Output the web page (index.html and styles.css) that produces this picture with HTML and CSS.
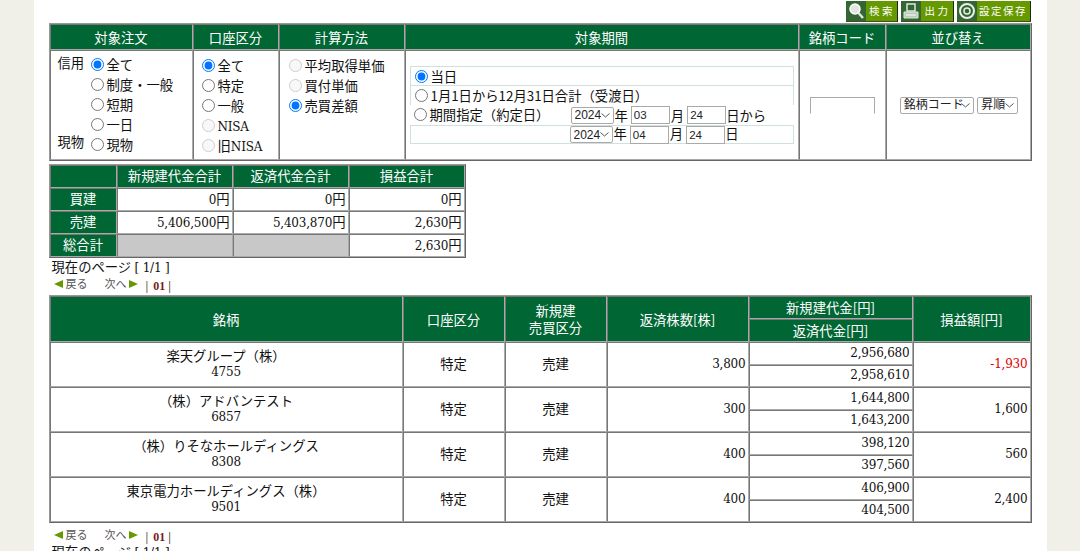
FILE: index.html
```html
<!DOCTYPE html>
<html lang="ja">
<head>
    <meta charset="UTF-8">
    <title>実現損益</title>
    <link rel="stylesheet" href="styles.css">
</head>
<body>
<div class="wrap">

    <div class="tool-btns">
        <a class="tool-btn btn-search"><span class="tool-icon">
            <svg width="20" height="20" viewBox="0 0 20 20"><circle cx="9" cy="8" r="5" fill="#dfe8df" stroke="#fff" stroke-width="1.5"/><path d="M12.5 12l4.5 5" stroke="#dfe8df" stroke-width="2.5"/></svg>
        </span><span class="tool-label">検索</span></a>
        <a class="tool-btn btn-print"><span class="tool-icon">
            <svg width="20" height="20" viewBox="0 0 20 20"><path d="M6 3h8v7H6z" fill="none" stroke="#dfe8df" stroke-width="1.5"/><path d="M3 11h14v6H3z" fill="#b8ccb8" stroke="#dfe8df"/><path d="M5 14h10" stroke="#fff"/></svg>
        </span><span class="tool-label">出力</span></a>
        <a class="tool-btn btn-save"><span class="tool-icon">
            <svg width="20" height="20" viewBox="0 0 20 20"><circle cx="10" cy="10" r="7" fill="none" stroke="#e8efe8" stroke-width="2"/><circle cx="10" cy="10" r="3" fill="none" stroke="#e8efe8" stroke-width="1.5"/></svg>
        </span><span class="tool-label">設定保存</span></a>
    </div>

    <form>
    <table class="grid search-table">
        <tr class="head-row">
            <th class="c-order">対象注文</th>
            <th class="c-account">口座区分</th>
            <th class="c-calc">計算方法</th>
            <th class="c-period">対象期間</th>
            <th class="c-code">銘柄コード</th>
            <th class="c-sort">並び替え</th>
        </tr>
        <tr class="search-row">
            <td>
                <div class="order-grid">
                    <span class="order-label">信用</span>
                    <div>
                        <label class="opt"><input type="radio" name="order" checked>全て</label>
                        <label class="opt"><input type="radio" name="order">制度・一般</label>
                        <label class="opt"><input type="radio" name="order">短期</label>
                        <label class="opt"><input type="radio" name="order">一日</label>
                    </div>
                    <span class="order-label order-label-2">現物</span>
                    <label class="opt"><input type="radio" name="order">現物</label>
                </div>
            </td>
            <td>
                <div class="opt-list">
                    <label class="opt"><input type="radio" name="account" checked>全て</label>
                    <label class="opt"><input type="radio" name="account">特定</label>
                    <label class="opt"><input type="radio" name="account">一般</label>
                    <label class="opt"><input type="radio" name="account" disabled><span class="lat">NISA</span></label>
                    <label class="opt"><input type="radio" name="account" disabled>旧<span class="lat">NISA</span></label>
                </div>
            </td>
            <td>
                <div class="opt-list opt-list-calc">
                    <label class="opt"><input type="radio" name="calc" disabled>平均取得単価</label>
                    <label class="opt"><input type="radio" name="calc" disabled>買付単価</label>
                    <label class="opt"><input type="radio" name="calc" checked>売買差額</label>
                </div>
            </td>
            <td>
                <div class="period">
                    <div class="period-row boxed"><label class="opt"><input type="radio" name="period" checked>当日</label></div>
                    <div class="period-row boxed-open"><label class="opt gothic"><input type="radio" name="period">1月1日から12月31日合計（受渡日）</label></div>
                    <div class="period-row">
                        <label class="opt period-label"><input type="radio" name="period">期間指定（約定日）</label>
                        <select class="sel-year"><option>2024</option></select><span class="unit">年</span>
                        <input class="inp-date" type="text" value="03"><span class="unit">月</span>
                        <input class="inp-date" type="text" value="24"><span>日から</span>
                    </div>
                    <div class="period-row boxed last-row">
                        <span class="period-label"></span>
                        <select class="sel-year"><option>2024</option></select><span class="unit">年</span>
                        <input class="inp-date" type="text" value="04"><span class="unit">月</span>
                        <input class="inp-date" type="text" value="24"><span>日</span>
                    </div>
                </div>
            </td>
            <td class="center"><input class="inp-code" type="text"></td>
            <td class="center">
                <select class="sel-sort sort-key"><option>銘柄コード</option></select>
                <select class="sel-sort sort-dir"><option>昇順</option></select>
            </td>
        </tr>
    </table>
    </form>

    <table class="grid total-table">
        <tr>
            <th class="t-side"></th>
            <th class="t-col">新規建代金合計</th>
            <th class="t-col">返済代金合計</th>
            <th class="t-col">損益合計</th>
        </tr>
        <tr>
            <th>買建</th>
            <td class="num"><span class="lat">0</span>円</td>
            <td class="num"><span class="lat">0</span>円</td>
            <td class="num"><span class="lat">0</span>円</td>
        </tr>
        <tr>
            <th>売建</th>
            <td class="num"><span class="lat">5,406,500</span>円</td>
            <td class="num"><span class="lat">5,403,870</span>円</td>
            <td class="num"><span class="lat">2,630</span>円</td>
        </tr>
        <tr>
            <th>総合計</th>
            <td class="blank"></td>
            <td class="blank"></td>
            <td class="num"><span class="lat">2,630</span>円</td>
        </tr>
    </table>

    <p class="page-now">現在のページ <span class="lat">[ 1/1 ]</span></p>
    <div class="pager pager-top">
        <a class="pager-link"><i class="tri-left"></i>戻る</a>
        <a class="pager-link pager-next">次へ<i class="tri-right"></i></a>
        <span class="pager-nums">|<b>01</b>|</span>
    </div>

    <table class="grid result-table">
        <tr class="r-head">
            <th rowspan="2" class="r-name">銘柄</th>
            <th rowspan="2" class="r-acc">口座区分</th>
            <th rowspan="2" class="r-side">新規建<br>売買区分</th>
            <th rowspan="2" class="r-qty">返済株数[株]</th>
            <th class="r-amt">新規建代金[円]</th>
            <th rowspan="2" class="r-pl">損益額[円]</th>
        </tr>
        <tr class="r-head"><th>返済代金[円]</th></tr>

        <tr>
            <td rowspan="2" class="center">楽天グループ（株）<br><span class="lat">4755</span></td>
            <td rowspan="2" class="center">特定</td>
            <td rowspan="2" class="center">売建</td>
            <td rowspan="2" class="num lat">3,800</td>
            <td class="num lat">2,956,680</td>
            <td rowspan="2" class="num lat loss">-1,930</td>
        </tr>
        <tr><td class="num lat">2,958,610</td></tr>

        <tr>
            <td rowspan="2" class="center">（株）アドバンテスト<br><span class="lat">6857</span></td>
            <td rowspan="2" class="center">特定</td>
            <td rowspan="2" class="center">売建</td>
            <td rowspan="2" class="num lat">300</td>
            <td class="num lat">1,644,800</td>
            <td rowspan="2" class="num lat">1,600</td>
        </tr>
        <tr><td class="num lat">1,643,200</td></tr>

        <tr>
            <td rowspan="2" class="center">（株）りそなホールディングス<br><span class="lat">8308</span></td>
            <td rowspan="2" class="center">特定</td>
            <td rowspan="2" class="center">売建</td>
            <td rowspan="2" class="num lat">400</td>
            <td class="num lat">398,120</td>
            <td rowspan="2" class="num lat">560</td>
        </tr>
        <tr><td class="num lat">397,560</td></tr>

        <tr>
            <td rowspan="2" class="center">東京電力ホールディングス（株）<br><span class="lat">9501</span></td>
            <td rowspan="2" class="center">特定</td>
            <td rowspan="2" class="center">売建</td>
            <td rowspan="2" class="num lat">400</td>
            <td class="num lat">406,900</td>
            <td rowspan="2" class="num lat">2,400</td>
        </tr>
        <tr><td class="num lat">404,500</td></tr>
    </table>

    <div class="pager pager-bottom">
        <a class="pager-link"><i class="tri-left"></i>戻る</a>
        <a class="pager-link pager-next">次へ<i class="tri-right"></i></a>
        <span class="pager-nums">|<b>01</b>|</span>
    </div>
    <p class="page-now">現在のページ <span class="lat">[ 1/1 ]</span></p>

</div>
</body>
</html>
```

FILE: styles.css
```css
html {
    overflow: hidden;
    height: 551px;
}

body {
    margin: 0;
    background-color: #f0f0e8;
    color: #111;
    font-family: "Liberation Serif", "Noto Sans CJK JP", serif;
    font-size: 13.33px;
}

.wrap {
    box-sizing: border-box;
    width: 1013px;
    margin: 0 auto;
    padding: 1px 15px 20px;
    background-color: #fff;
}

.lat {
    font-family: "DejaVu Serif", serif;
    font-size: 12px;
    letter-spacing: -0.2px;
}

.gothic { font-family: "Noto Sans CJK JP", sans-serif; }

/* top buttons */
.tool-btns {
    display: flex;
    justify-content: flex-end;
    gap: 3px;
    height: 22px;
    padding-right: 1px;
}

.tool-btn {
    display: flex;
    height: 21px;
    background-color: #669900;
    border-right: 1px solid #1d2a10;
    border-bottom: 1px solid #38531a;
    box-sizing: border-box;
}

.btn-search { width: 52px; }
.btn-print { width: 53px; }
.btn-save { width: 74px; }

.btn-search .tool-label, .btn-print .tool-label {
    letter-spacing: 2.5px;
    text-indent: 2px;
}

.tool-icon {
    width: 20px;
    background-color: #336633;
}

.tool-label {
    flex: 1;
    color: #fff;
    font-size: 10.5px;
    line-height: 20px;
    letter-spacing: 1.5px;
    text-align: center;
    font-family: "Noto Sans CJK JP", sans-serif;
}

/* tables */
.grid {
    border-collapse: separate;
    border-spacing: 0;
    border: 1px solid;
    border-color: #999 #666 #666 #999;
    table-layout: fixed;
}

.grid th, .grid td {
    border: 1px solid;
    border-color: #777 #aaa #aaa #777;
    padding: 0;
    font-weight: normal;
}

.grid th {
    background-color: #006633;
    color: #fff;
    text-align: center;
}

.center { text-align: center; }

.num {
    text-align: right;
    padding-right: 2px !important;
}

.search-table {
    width: 983px;
    height: 138px;
}

.c-order { width: 141px; }
.c-account { width: 84px; }
.c-calc { width: 124px; }
.c-period { width: 392px; }
.c-code { width: 85px; }

.head-row th { height: 24px; }

.search-row td { vertical-align: top; }
.search-row td.center { vertical-align: middle; }

.order-grid {
    display: grid;
    grid-template-columns: 31px auto;
    padding: 4px 0 0 7px;
}

.order-label { line-height: 19px; margin-top: -1px; }
.order-label-2 { margin-top: -2px; }

.opt {
    display: block;
    height: 20px;
    line-height: 21px;
    white-space: nowrap;
}

.opt input {
    width: 13px;
    height: 13px;
    margin: 0 3px 0 2px;
    vertical-align: -1px;
}

.opt-list { padding: 5px 0 0 6px; }
.opt-list-calc { padding-left: 7px; }

.period {
    padding-top: 15px;
    margin: 0 4px 0 4px;
}

.period-row {
    display: flex;
    align-items: center;
    box-sizing: border-box;
    height: 20px;
    white-space: nowrap;
}

.boxed {
    border: 1px solid #d0e0dc;
}

.boxed .opt { margin-top: 2px; }

.boxed-open {
    height: 19px;
    border: 1px solid #d0e0dc;
    border-top: 0;
    border-bottom: 0;
}

.boxed-open .opt { margin-bottom: 2px; }

.last-row { height: 19px; }
.last-row span { margin-bottom: 3px; }

.period-row .opt { margin-left: 2px; }

.period-label {
    width: 159px;
    flex-shrink: 0;
}

.unit { margin: 0 3px 0 1px; }

.sel-year, .sel-sort {
    appearance: none;
    box-sizing: border-box;
    font-family: "Liberation Sans", "Noto Sans CJK JP", sans-serif;
    font-size: 12px;
    height: 17px;
    padding: 0 0 0 3px;
    color: #222;
    border: 1px solid #aaa;
    border-radius: 2px;
    background: #fff url("data:image/svg+xml,%3Csvg xmlns='http://www.w3.org/2000/svg' width='9' height='5'%3E%3Cpath d='M.5.5l4 3.5 4-3.5' fill='none' stroke='%23555'/%3E%3C/svg%3E") no-repeat right 3px center;
}

.sel-year { width: 43px; }
.sort-key { width: 74px; margin-left: 2px; }
.sort-dir { width: 41px; }

.inp-date {
    box-sizing: border-box;
    width: 39px;
    height: 18px;
    padding: 0 2px;
    font-family: "Liberation Sans", sans-serif;
    font-size: 11.5px;
    border: 1px solid #aaa;
    color: #222;
}

.inp-code {
    box-sizing: border-box;
    width: 65px;
    height: 17px;
    border: 1px solid #aaa;
    border-bottom-color: #fff;
}

.total-table {
    width: 417px;
    margin-top: 3px;
}

.t-side { width: 65px; }
.t-col { width: 114px; }

.total-table th, .total-table td { height: 21px; line-height: 18px; }
.total-table .blank { background-color: #c8c8c8; }

.page-now {
    margin: 1px 0 0 3px;
    line-height: 18px;
}

.pager {
    display: flex;
    align-items: center;
    height: 18px;
    margin-left: 5px;
    font-size: 11px;
    color: #555;
}

.pager-top {
    margin-top: -3px;
    margin-bottom: 3px;
}

.pager-link { display: inline-block; }
.pager-next { margin-left: 17px; }

.tri-left, .tri-right {
    display: inline-block;
    width: 0;
    height: 0;
    border-top: 4.5px solid transparent;
    border-bottom: 4.5px solid transparent;
}

.tri-left {
    border-right: 9px solid #669900;
    margin-right: 3px;
}

.tri-right {
    border-left: 9px solid #669900;
    margin-left: 2px;
}

.pager-nums {
    margin: 6px 0 0 8px;
    font-size: 13.33px;
    color: #222;
}

.pager-nums b {
    margin: 0 3px 0 5px;
    font-size: 12px;
    color: #7a1a1a;
}

.result-table { width: 983px; }

.r-name { width: 351px; }
.r-acc { width: 100px; }
.r-side { width: 100px; }
.r-qty { width: 140px; }
.r-amt { width: 162px; }

.r-head th {
    height: 21px;
    line-height: 17px;
    font-family: "Noto Sans CJK JP", sans-serif;
}

.result-table td { height: 20.5px; line-height: 15px; }

.loss { color: #e00000; }

.pager-bottom {
    margin: 2px 0 0 5px;
}
```
